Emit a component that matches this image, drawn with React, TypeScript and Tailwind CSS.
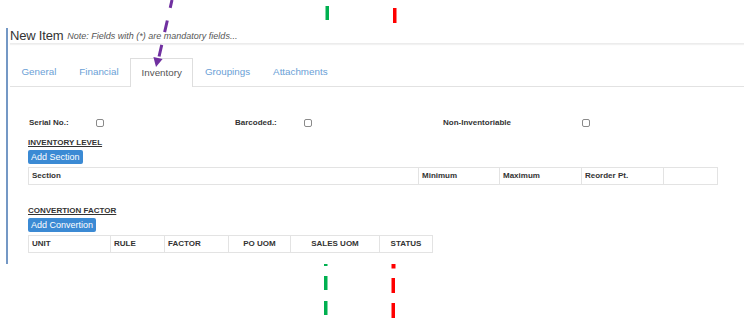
import React from 'react'

const tabs = ['General', 'Financial', 'Inventory', 'Groupings', 'Attachments']

function Check() {
  return <span className="block w-[8px] h-[8px] rounded-[2px] border border-[#8a8a8a] bg-white" />
}

function Heading({ children }: { children: React.ReactNode }) {
  return <div className="text-[8px] leading-[10px] font-bold text-[#333] underline underline-offset-1">{children}</div>
}

function BlueButton({ children }: { children: React.ReactNode }) {
  return (
    <button className="block mt-[2px] h-[14px] px-[3px] rounded-[2px] bg-[#3b8ad4] text-white text-[9px] leading-[14px]">
      {children}
    </button>
  )
}

function Annotations() {
  return (
    <svg className="absolute inset-0 pointer-events-none" width="744" height="321" viewBox="0 0 744 321">
      <line x1="172" y1="0" x2="158.5" y2="59" stroke="#7030a0" strokeWidth="3" strokeDasharray="12 13" strokeDashoffset="4" />
      <polygon points="156,67 162.6,59 153.4,57" fill="#7030a0" />
      <rect x="325.5" y="6" width="3.5" height="14" fill="#00b050" />
      <rect x="393" y="8" width="3.5" height="15" fill="#ff0000" />
      <rect x="324" y="264" width="3.5" height="2" fill="#00b050" />
      <rect x="324" y="276" width="3.5" height="14" fill="#00b050" />
      <rect x="324" y="301" width="3.5" height="14" fill="#00b050" />
      <rect x="391.5" y="264" width="4" height="4.5" fill="#ff0000" />
      <rect x="391.5" y="278" width="3.5" height="15" fill="#ff0000" />
      <rect x="391.5" y="303" width="3.5" height="15" fill="#ff0000" />
    </svg>
  )
}

export default function App() {
  return (
    <div className="relative w-[744px] h-[321px] overflow-hidden bg-white font-['Liberation_Sans',Arial,sans-serif]">
      <div className="pt-[28px]">
        <div className="ml-[6px] border-l-2 border-[#7498c5] pl-[2px] pb-[11px]">
          {/* header */}
          <div className="h-[16px] flex items-end gap-[4px] border-b border-[#ececec] shadow-[0_1px_1px_#f2f2f2]">
            <span className="text-[13px] leading-[15px] text-[#333] tracking-[-0.2px]">New Item</span>
            <span className="text-[9px] leading-[13px] italic text-[#555]">Note: Fields with (*) are mandatory fields...</span>
          </div>

          {/* tabs */}
          <div className="mt-[14px] h-[29px] flex border-b border-[#e2e2e2]">
            {tabs.map(t =>
              t === 'Inventory' ? (
                <div key={t} className="h-[29px] px-[10.5px] flex items-center border border-b-0 border-[#dedede] bg-white -mb-px text-[9.8px] text-[#555]">
                  {t}
                </div>
              ) : (
                <div key={t} className="h-[28px] px-[11.5px] flex items-center text-[9.8px] text-[#6aa0d6]">
                  {t}
                </div>
              )
            )}
          </div>

          <div className="pl-[18px]">
            {/* checkboxes */}
            <div className="mt-[30px] h-[10px] grid grid-cols-[68px_139px_69px_139px_139px_1fr] items-center text-[8px] font-bold text-[#333]">
              <span className="pl-px">Serial No.:</span>
              <Check />
              <span>Barcoded.:</span>
              <Check />
              <span>Non-Inventoriable</span>
              <Check />
            </div>

            {/* inventory level */}
            <div className="mt-[11px]">
              <Heading>INVENTORY LEVEL</Heading>
              <BlueButton>Add Section</BlueButton>
            </div>
            <table className="mt-[3px] w-[690px] border-collapse table-fixed text-[8px] font-bold text-[#333]">
              <tbody>
                <tr className="h-[17px]">
                  <td className="w-[390px] border border-[#e3e3e3] pl-[3px]">Section</td>
                  <td className="w-[81px] border border-[#e3e3e3] pl-[3px]">Minimum</td>
                  <td className="w-[82px] border border-[#e3e3e3] pl-[3px]">Maximum</td>
                  <td className="w-[82px] border border-[#e3e3e3] pl-[3px]">Reorder Pt.</td>
                  <td className="border border-[#e3e3e3]"></td>
                </tr>
              </tbody>
            </table>

            {/* convertion factor */}
            <div className="mt-[21px]">
              <Heading>CONVERTION FACTOR</Heading>
              <BlueButton>Add Convertion</BlueButton>
            </div>
            <table className="mt-[3px] w-[405px] border-collapse table-fixed text-[8px] font-bold text-[#333]">
              <tbody>
                <tr className="h-[17px]">
                  <td className="w-[82px] border border-[#e3e3e3] pl-[3px]">UNIT</td>
                  <td className="w-[54px] border border-[#e3e3e3] pl-[3px]">RULE</td>
                  <td className="w-[64px] border border-[#e3e3e3] pl-[3px]">FACTOR</td>
                  <td className="w-[62px] border border-[#e3e3e3] text-center">PO UOM</td>
                  <td className="w-[89px] border border-[#e3e3e3] text-center">SALES UOM</td>
                  <td className="border border-[#e3e3e3] text-center">STATUS</td>
                </tr>
              </tbody>
            </table>
          </div>
        </div>
      </div>
      <Annotations />
    </div>
  )
}
